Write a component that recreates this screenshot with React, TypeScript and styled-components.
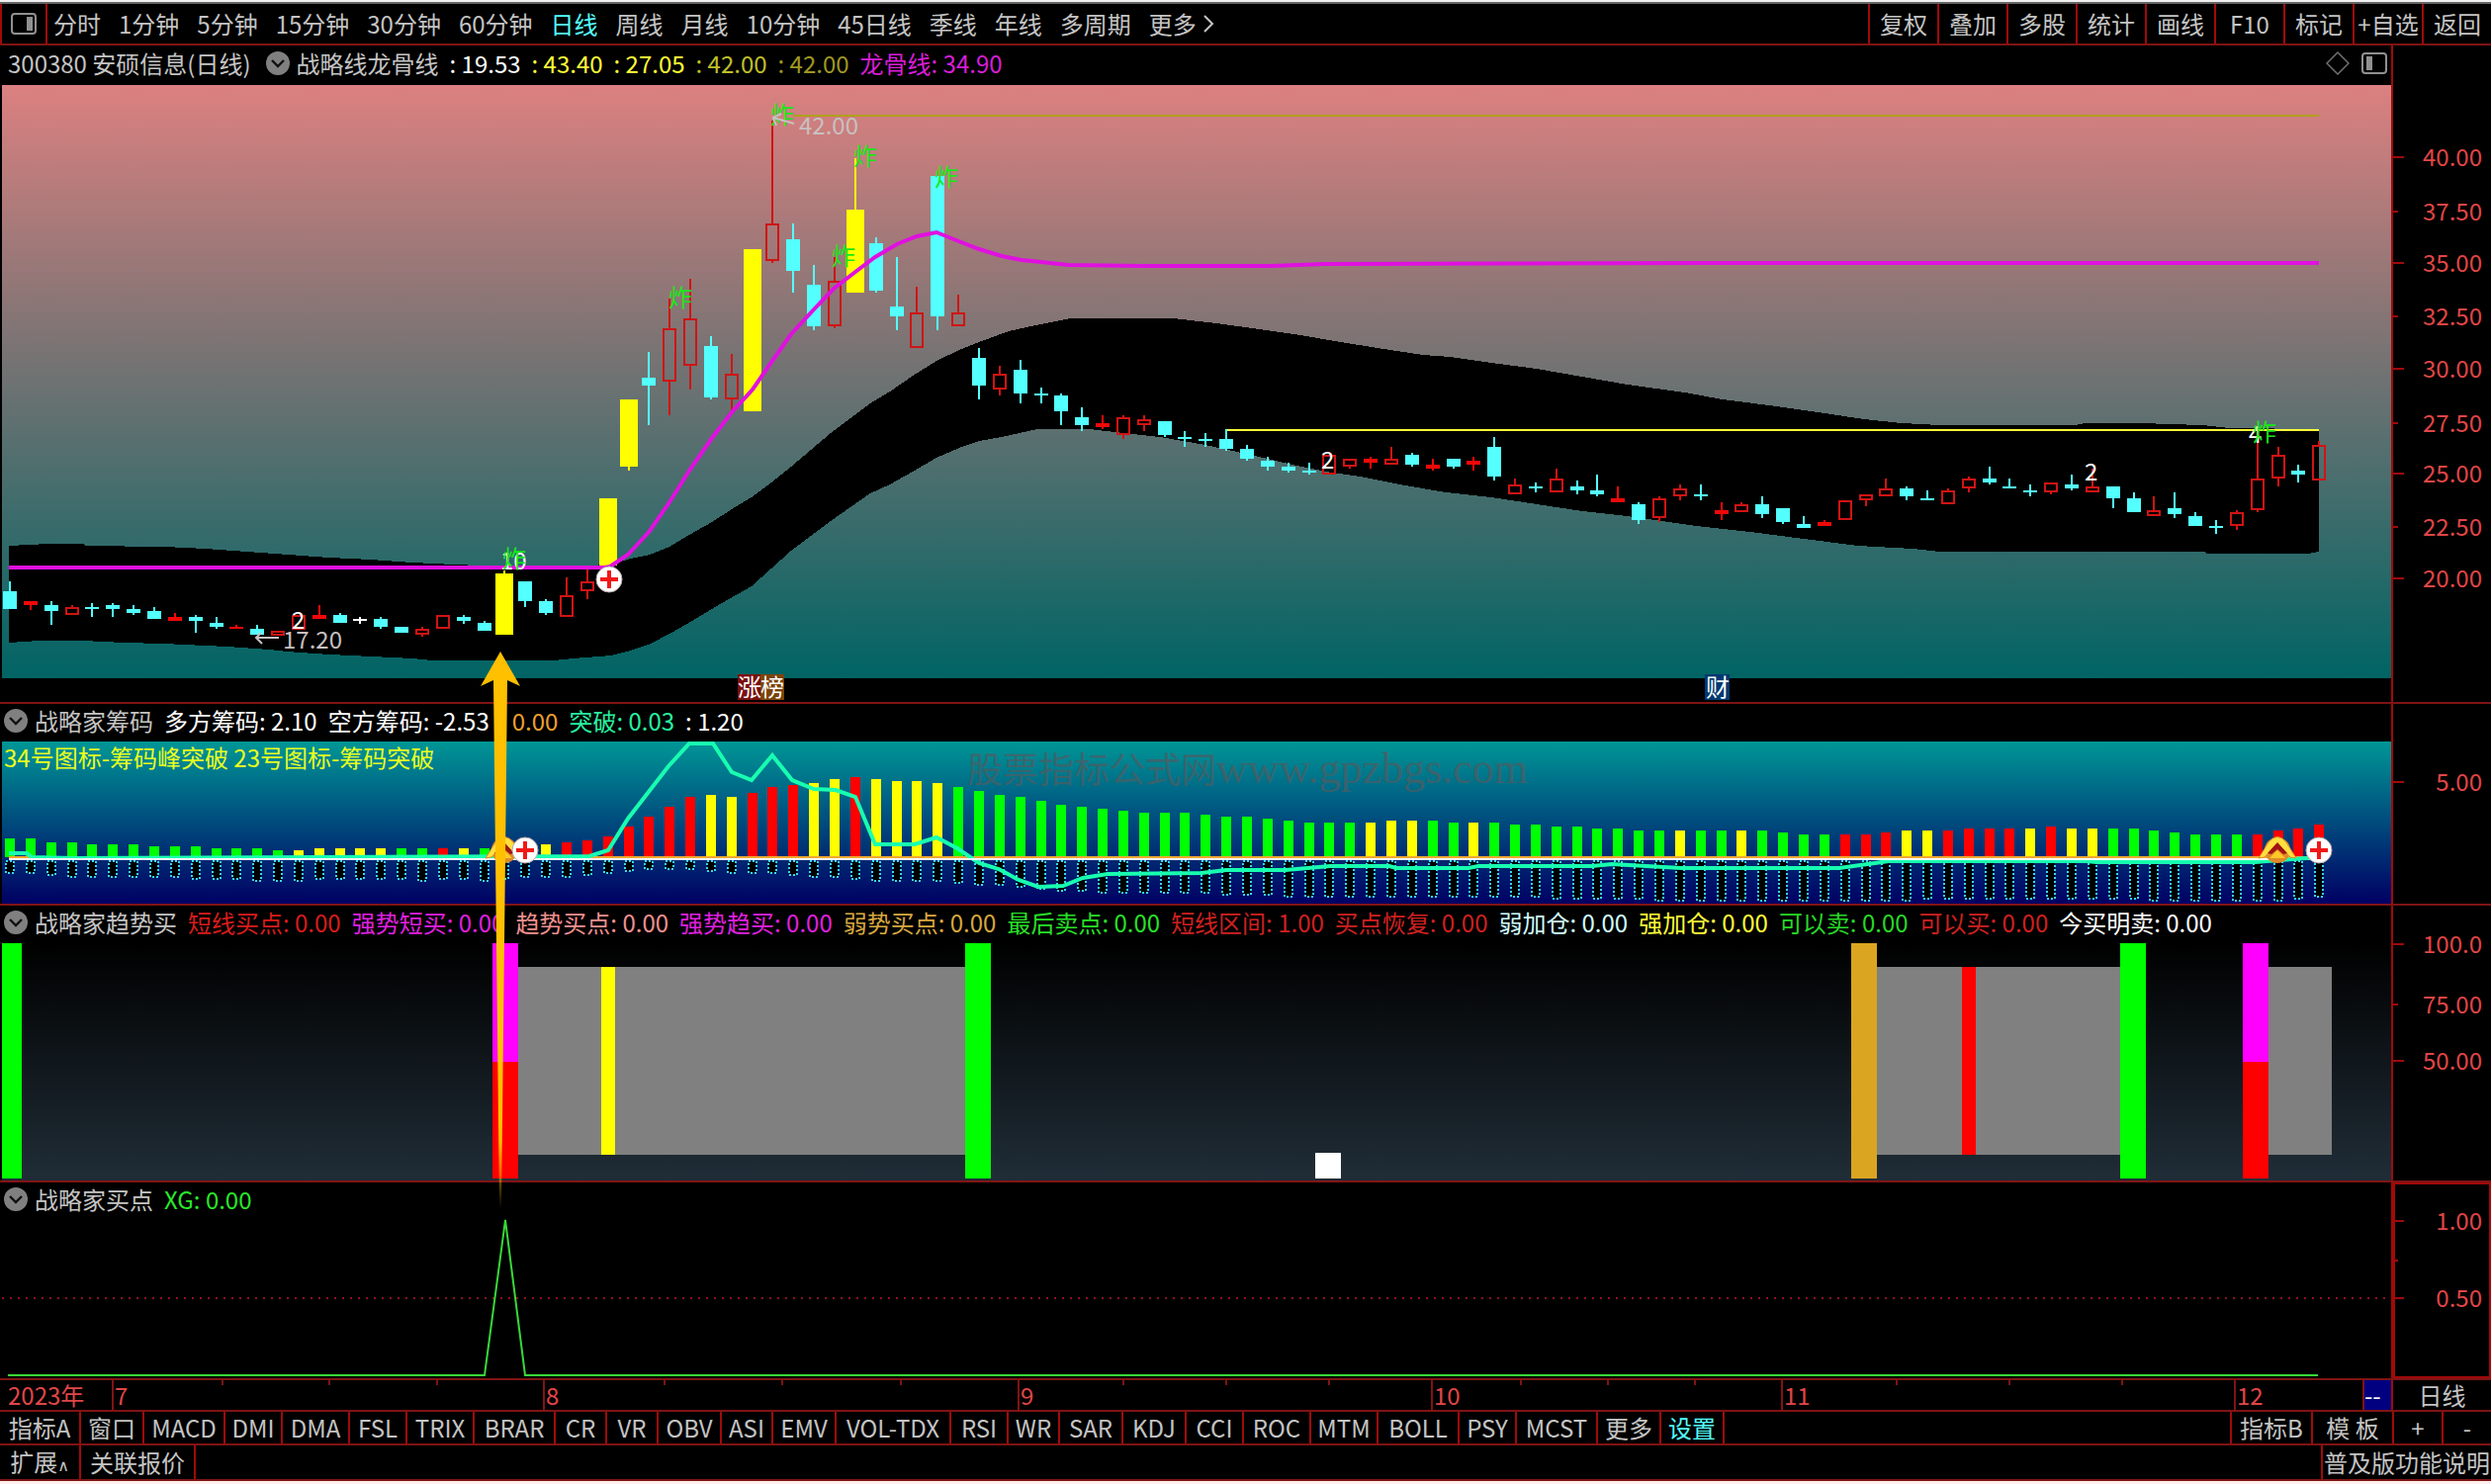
import React from "react";
import styled, { createGlobalStyle } from "styled-components";

const LINE = "#801414";
const RULE = "#a00a0a";
const GREY = "#c4c4c4";
const CYAN = "#54ffff";
const RED = "#d01414";
const AXIS = "#e04646";
const FONT = '"Noto Sans CJK SC", "Noto Sans", sans-serif';

const GlobalStyle = createGlobalStyle`
  * { box-sizing: border-box; }
  body {
    margin: 0;
    background: #000;
    font: 24px/32px ${FONT};
    color: ${GREY};
  }
  button {
    margin: 0;
    padding: 0;
    border: 0;
    background: none;
    color: inherit;
    font: inherit;
    white-space: nowrap;
    cursor: pointer;
  }
`;

const Page = styled.div`
  display: flex;
  flex-direction: column;
  min-height: 100vh;
  overflow: hidden;
  border-top: 2px solid #f0f0f0;
  border-bottom: 3px solid #fff0ee;
`;

const Toolbar = styled.header`
  display: flex;
  justify-content: space-between;
  height: 44px;
  border-top: 2px solid #646464;
  border-bottom: 2px solid ${LINE};
`;

const PeriodNav = styled.nav`
  display: flex;
  align-items: center;
  gap: 18px;
`;

const LayoutToggle = styled.button`
  display: flex;
  align-items: center;
  justify-content: center;
  align-self: stretch;
  width: 48px;
  margin-right: -12px;
  border-left: 2px solid ${RULE};
  border-right: 2px solid ${RULE};
`;

const PeriodButton = styled.button<{ $active?: boolean }>`
  display: flex;
  align-items: center;
  gap: 6px;
  color: ${(p) => (p.$active ? CYAN : GREY)};
`;

const ToolGroup = styled.div`
  display: flex;
`;

const ToolButton = styled.button`
  width: 70px;
  border-left: 2px solid ${RULE};
`;

const Charts = styled.main`
  position: relative;
  flex: 1;
  display: flex;
  flex-direction: column;
`;

const Panel = styled.section<{ $share: number }>`
  flex: ${(p) => p.$share} 1 0;
  min-height: 0;
  display: grid;
  grid-template-columns: minmax(0, 1fr) 101px;
  border-bottom: 2px solid ${LINE};
`;

const Pane = styled.div`
  position: relative;
  display: flex;
  flex-direction: column;
  min-height: 0;
`;

const PaneHeader = styled.div<{ $main?: boolean }>`
  display: flex;
  flex: none;
  align-items: center;
  gap: 11px;
  height: ${(p) => (p.$main ? 40 : 38)}px;
  padding: 0 4px 4px ${(p) => (p.$main ? 8 : 4)}px;
  white-space: nowrap;
`;

const Title = styled.span`
  display: flex;
  align-items: center;
  gap: 7px;
`;

const StockName = styled.span`
  padding-right: 8px;
`;

const Reading = styled.span<{ $color: string }>`
  color: ${(p) => p.$color};
`;

const HeaderTools = styled.span`
  display: flex;
  align-items: center;
  gap: 12px;
  margin-left: auto;
`;

const FoldButton = styled.button`
  display: flex;
`;

const Plot = styled.svg`
  display: block;
  flex: 1 1 0;
  width: 100%;
  min-height: 0;
  overflow: visible;
`;

const AxisColumn = styled.div<{ $boxed?: boolean }>`
  display: flex;
  min-height: 0;
  border-left: 2px solid ${RULE};
  ${(p) => p.$boxed && `box-shadow: inset 0 0 0 2px ${RULE};`}
`;

const Arrow = styled.svg`
  position: absolute;
  inset: 0;
  width: 100%;
  height: 100%;
  pointer-events: none;
`;

const DateRow = styled.div`
  display: grid;
  grid-template-columns: minmax(0, 1fr) 101px;
  height: 32px;
  border-bottom: 2px solid ${LINE};
  line-height: 30px;
`;

const Months = styled.div`
  display: grid;
  grid-template-columns: 113fr 436fr 480fr 418fr 354fr 458fr 130fr 29fr;
  color: ${AXIS};
`;

const Month = styled.div`
  position: relative;
  min-width: 0;
  padding-left: 1px;
  border-left: 2px solid ${LINE};
  &:first-child {
    padding-left: 8px;
    border: 0;
  }
`;

const Weeks = styled.div`
  position: absolute;
  inset: 0 0 auto;
  display: grid;
  grid-template-columns: repeat(4, 1fr);
  height: 5px;
  span + span {
    border-left: 2px solid ${LINE};
  }
`;

const Cursor = styled.div`
  min-width: 0;
  border-left: 2px solid ${LINE};
  background: #000080;
  color: #fff;
`;

const CurrentPeriod = styled.button`
  border-left: 2px solid ${RULE};
`;

const TabRow = styled.footer<{ $tall?: boolean }>`
  display: flex;
  justify-content: space-between;
  height: ${(p) => (p.$tall ? 36 : 34)}px;
  border-bottom: 2px solid ${LINE};
`;

const TabGroup = styled.div<{ $end?: boolean }>`
  display: flex;
  button {
    ${(p) => (p.$end ? "border-left" : "border-right")}: 2px solid ${RULE};
  }
`;

const TAB_WIDTHS = { xs: 52, s: 58, m: 64, l: 68, xl: 82, xxl: 116 };
type TabSize = keyof typeof TAB_WIDTHS;

const Tab = styled.button<{ $active?: boolean; $size: TabSize }>`
  width: ${(p) => TAB_WIDTHS[p.$size]}px;
  color: ${(p) => (p.$active ? CYAN : GREY)};
`;

const ZoomTab = styled.button`
  width: 50px;
`;

const HelpTab = styled.button`
  padding: 0 1px;
`;

const Caret = styled.span`
  font-family: "DejaVu Sans", sans-serif;
  font-size: 16px;
`;

/* Bar centre for a trading-day index. */
const X = (i: number) => 10 + 20.85 * i;

type Kind = "c" | "r" | "s" | "y" | "w";
type Candle = [Kind, number, number, number, number];

/* kind, high, body top, body bottom, low */
const CANDLES: Candle[] = [
  ["c", 588, 598, 616, 616], ["s", 608, 608, 612, 617], ["c", 608, 612, 618, 632], ["r", 612, 614, 622, 622],
  ["c", 610, 614, 616, 624], ["c", 610, 612, 616, 624], ["c", 612, 616, 620, 622], ["c", 614, 618, 626, 626],
  ["s", 620, 624, 628, 628], ["c", 622, 624, 628, 640], ["c", 624, 630, 634, 636], ["s", 632, 634, 636, 636],
  ["c", 632, 636, 642, 642], ["r", 638, 638, 643, 643], ["r", 622, 622, 637, 637], ["s", 612, 622, 626, 626],
  ["c", 620, 622, 630, 630], ["w", 624, 626, 628, 631], ["c", 624, 626, 634, 636], ["c", 634, 634, 640, 640],
  ["r", 634, 636, 642, 644], ["r", 622, 622, 636, 636], ["c", 622, 624, 628, 631], ["c", 628, 630, 638, 638],
  ["y", 577, 580, 642, 642], ["c", 588, 588, 608, 614], ["c", 606, 608, 620, 622], ["r", 584, 602, 624, 624],
  ["r", 576, 588, 598, 606], ["y", 504, 504, 572, 572], ["y", 404, 404, 472, 476], ["c", 356, 382, 390, 430],
  ["r", 302, 332, 386, 420], ["r", 282, 322, 370, 394], ["c", 340, 350, 402, 404], ["r", 358, 378, 404, 416],
  ["y", 252, 252, 416, 416], ["r", 122, 226, 264, 266], ["c", 226, 242, 274, 296], ["c", 268, 288, 330, 334],
  ["r", 260, 284, 330, 332], ["y", 160, 212, 296, 296], ["c", 240, 246, 294, 296], ["c", 260, 310, 320, 334],
  ["r", 290, 316, 352, 352], ["c", 178, 178, 320, 334], ["r", 298, 316, 330, 330], ["c", 352, 362, 390, 404],
  ["r", 370, 378, 394, 400], ["c", 364, 374, 398, 408], ["c", 392, 398, 400, 408], ["c", 398, 400, 416, 430],
  ["c", 412, 422, 430, 436], ["s", 420, 428, 432, 434], ["r", 420, 422, 440, 444], ["r", 420, 424, 430, 436],
  ["c", 426, 426, 440, 442], ["c", 436, 442, 444, 452], ["c", 438, 444, 446, 452], ["c", 434, 444, 454, 456],
  ["c", 450, 454, 464, 466], ["c", 462, 466, 472, 476], ["c", 468, 472, 476, 478], ["c", 468, 476, 478, 480],
  ["r", 460, 460, 480, 480], ["r", 464, 464, 472, 474], ["s", 462, 464, 468, 474], ["r", 452, 464, 470, 470],
  ["c", 458, 460, 470, 472], ["s", 464, 470, 474, 476], ["c", 464, 464, 472, 474], ["s", 462, 466, 470, 476],
  ["c", 442, 452, 482, 486], ["r", 484, 490, 500, 500], ["c", 488, 492, 494, 498], ["r", 474, 484, 498, 498],
  ["c", 486, 492, 496, 500], ["c", 480, 496, 500, 502], ["s", 492, 504, 508, 508], ["c", 508, 510, 526, 530],
  ["r", 502, 504, 524, 528], ["r", 490, 494, 502, 506], ["c", 490, 500, 502, 506], ["s", 508, 516, 520, 526],
  ["r", 508, 510, 518, 518], ["c", 502, 510, 520, 524], ["c", 514, 514, 528, 530], ["c", 522, 530, 534, 534],
  ["s", 526, 528, 532, 532], ["r", 506, 506, 526, 526], ["r", 500, 500, 506, 512], ["r", 484, 494, 502, 502],
  ["c", 492, 494, 502, 506], ["c", 496, 504, 506, 506], ["r", 494, 496, 510, 510], ["r", 482, 484, 494, 498],
  ["c", 472, 484, 488, 490], ["c", 484, 492, 494, 494], ["c", 490, 496, 498, 502], ["r", 488, 488, 498, 500],
  ["c", 480, 490, 494, 496], ["r", 474, 492, 498, 498], ["c", 492, 492, 504, 514], ["c", 498, 504, 518, 518],
  ["r", 502, 516, 522, 522], ["c", 498, 514, 520, 524], ["c", 518, 522, 532, 532], ["c", 526, 532, 534, 540],
  ["r", 516, 518, 532, 536], ["r", 443, 484, 516, 518], ["r", 452, 460, 484, 492], ["c", 470, 476, 480, 488],
  ["r", 446, 450, 486, 486],
];

const BAND_UPPER =
  "9,552 49,550 84,550 86,552 166,553 208,555 250,558 292,561 333,564 375,566 417,569 460,571 510,573 570,573 617,571 638,565 657,561 677,553 697,541 720,528 740,515 760,503 780,488 800,472 820,455 840,438 860,423 880,408 900,396 923,380 947,365 970,354 990,346 1020,335 1047,329 1083,322 1187,322 1230,327 1274,333 1315,339 1356,346 1393,352 1439,359 1467,361 1508,367 1554,373 1600,381 1646,389 1704,397 1742,404 1797,411 1852,419 1885,424 1923,428 1961,430 2098,430 2109,428 2164,428 2227,430 2254,433 2345,434";
const BAND_LOWER =
  "2345,558 2334,560 2231,560 2229,558 1961,558 1934,555 1879,552 1824,545 1770,538 1715,532 1646,522 1600,517 1554,510 1508,503 1462,498 1421,491 1375,482 1347,478 1311,471 1265,460 1219,450 1173,442 1127,437 1102,434 1049,434 1013,442 990,446 970,453 947,463 923,477 900,490 880,499 860,513 840,527 820,542 800,557 780,575 760,593 730,610 700,628 679,640 658,651 638,658 618,663 580,666 560,668 437,668 417,666 375,664 333,662 290,659 272,657 230,654 165,651 125,650 83,648 40,648 9,650";
const DRAGON_LINE =
  "9,574 612,574 617,573 635,561 657,537 677,508 697,476 720,443 740,417 761,394 781,365 800,338 823,313 843,292 865,275 885,260 907,247 927,239 947,235 967,243 990,252 1013,259 1033,263 1053,265 1080,268 1157,269 1285,269 1340,267 1720,266 2345,266";
const BREAK_LINE =
  "9,863 27,863 32,867 74,868 596,866 615,860 635,828 676,775 697,752 721,752 740,781 760,789 781,764 801,789 823,798 845,799 865,806 885,854 925,854 947,847 968,858 990,873 1010,879 1030,890 1050,897 1075,896 1095,888 1120,884 1215,883 1240,880 1300,880 1345,876 1405,876 1412,878 1485,878 1495,876 1610,876 1630,874 1700,878 1860,878 1910,871 2110,871 2120,872 2280,872 2345,867";

const repeat = (pairs: [number, number][]) => pairs.flatMap(([v, n]) => Array<number>(n).fill(v));

/* Top edge of each chip bar, run-length encoded. */
const CHIP_TOPS = repeat([
  [848, 2], [852, 2], [854, 3], [856, 3], [858, 3], [860, 2], [858, 11], [854, 1], [852, 1], [850, 1], [846, 1],
  [836, 1], [826, 1], [816, 1], [806, 1], [804, 1], [806, 1], [802, 1], [796, 1], [794, 1], [792, 1], [788, 1],
  [786, 1], [788, 1], [790, 2], [792, 1], [796, 1], [800, 1], [804, 1], [806, 1], [810, 1], [814, 1], [816, 1],
  [818, 1], [820, 1], [822, 3], [824, 1], [826, 2], [828, 1], [830, 1], [832, 4], [830, 3], [832, 3], [834, 2],
  [836, 2], [838, 2], [840, 7], [842, 1], [844, 4], [842, 1], [840, 3], [838, 4], [836, 1], [838, 4], [840, 1],
  [842, 1], [844, 4], [840, 1], [838, 1], [834, 1],
]);
const CHIP_COLORS =
  "ggggggggggggggyyyyyggrygyyyrrrrrrryyrrryyryyyygggggggggggggggggggg" +
  "yyyggygggggggggyggyggggrrryyrrrryryyggggggg" +
  "rrrr";
const CHIP_FLOORS = repeat([
  [884, 2], [886, 1], [888, 6], [890, 3], [892, 3], [890, 5], [892, 1], [890, 2], [892, 1], [890, 1], [888, 3],
  [886, 1], [884, 1], [882, 1], [880, 3], [882, 1], [884, 3], [886, 1], [888, 2], [890, 1], [892, 4], [894, 1],
  [896, 2], [898, 1], [900, 1], [902, 2], [904, 6], [906, 3], [908, 13], [910, 5], [912, 13], [910, 11], [912, 7],
  [910, 1], [908, 1],
]);
const BAR_FILL: Record<string, string> = { g: "#00ff00", y: "#ffff00", r: "#ff0000" };

const BLAST_LABELS: [number, number][] = [
  [508, 574], [676, 310], [779, 125], [863, 167], [945, 188], [841, 268], [2278, 446],
];

function CandleShape({ index, data }: { index: number; data: Candle }) {
  const [kind, high, top, bottom, low] = data;
  const x = Math.round(X(index));
  const color = { c: CYAN, r: RED, s: "#f00808", y: "#ffff00", w: "#ffffff" }[kind];
  const width = kind === "y" ? 18 : 14;
  const height = Math.max(2, bottom - top);
  return (
    <g fill={color}>
      <rect x={x - 1} y={high} width={2} height={top - high} />
      <rect x={x - 1} y={bottom} width={2} height={low - bottom} />
      {kind === "r" ? (
        <rect x={x - 6} y={top + 1} width={12} height={height - 2} fill="none" stroke={color} strokeWidth={2} />
      ) : (
        <rect x={Math.max(2, x - width / 2)} y={top} width={width} height={height} />
      )}
    </g>
  );
}

function CrossBadge({ x, y }: { x: number; y: number }) {
  return (
    <g>
      <circle cx={x} cy={y} r={13} fill="#fff" stroke="#b8a8a8" strokeWidth={1} />
      <path d={`M${x - 9} ${y}h18M${x} ${y - 9}v18`} stroke="#f01818" strokeWidth={4} />
    </g>
  );
}

function FlameBadge({ x, y }: { x: number; y: number }) {
  return (
    <g transform={`translate(${x} ${y})`}>
      <circle r={13} fill="#e08a28" />
      <path d="M-19 8L-9 -8Q0 -19 9 -8L19 8L13 7L0 -7L-13 7Z" fill="#ffe040" stroke="#e08a28" strokeWidth={1} />
      <path d="M-10 3L0 -8L10 3L6 4L0 -1L-6 4Z" fill="#a01410" />
      <path d="M-8 8L0 0L8 8Z" fill="#ffc828" />
    </g>
  );
}

function Fold({ label }: { label: string }) {
  return (
    <FoldButton type="button" aria-label={label}>
      <svg width="24" height="24" viewBox="0 0 24 24">
        <circle cx="12" cy="12" r="12" fill="#808080" />
        <path d="M6 9l6 6 6-6" fill="none" stroke="#101010" strokeWidth="2.4" />
      </svg>
    </FoldButton>
  );
}

type Tick = { y: number; text?: string; minor?: boolean };

function Axis({ top, height, ticks, boxed }: { top: number; height: number; ticks: Tick[]; boxed?: boolean }) {
  return (
    <AxisColumn $boxed={boxed}>
      <Plot viewBox={`0 ${top} 99 ${height}`} preserveAspectRatio="none">
        {ticks.map((t) => (
          <g key={t.y}>
            <rect x={0} y={t.y - 1} width={t.minor ? 5 : 11} height={2} fill={RULE} />
            {t.text && (
              <text x={90} y={t.y + 9} textAnchor="end" fontSize={24} fill={AXIS}>
                {t.text}
              </text>
            )}
          </g>
        ))}
      </Plot>
    </AxisColumn>
  );
}

function PriceChart() {
  return (
    <Plot viewBox="0 86 2418 624" preserveAspectRatio="none" fontSize={24}>
      <defs>
        <linearGradient id="price-sky" x1="0" y1="0" x2="0" y2="1">
          <stop offset="0" stopColor="#dc8080" />
          <stop offset="1" stopColor="#006464" />
        </linearGradient>
      </defs>
      <rect x={2} y={86} width={2416} height={600} fill="url(#price-sky)" />
      <polygon points={`${BAND_UPPER} ${BAND_LOWER}`} fill="#000" shapeRendering="crispEdges" />
      <g shapeRendering="crispEdges">
        <rect x={802} y={116} width={1543} height={2} fill="#b0a01c" />
        <rect x={1240} y={434} width={1105} height={2} fill="#ffff38" />
        {CANDLES.map((c, i) => (
          <CandleShape key={i} index={i} data={c} />
        ))}
      </g>
      <polyline points={DRAGON_LINE} fill="none" stroke="#e010e0" strokeWidth={4} />
      <g fill="#ffffff">
        <text x={295} y={636}>2</text>
        <text x={506} y={576}>10</text>
        <text x={1336} y={474}>2</text>
        <text x={2108} y={486}>2</text>
        <text x={2274} y={448}>4</text>
      </g>
      <g fill="#18e818">
        {BLAST_LABELS.map(([x, y]) => (
          <text key={x} x={x} y={y}>炸</text>
        ))}
      </g>
      <g fill="#c8c0c0">
        <text x={808} y={136}>42.00</text>
        <text x={286} y={656}>17.20</text>
      </g>
      <path d="M803 125L782 119M790 115L782 119L785 127" fill="none" stroke="#c8c0c0" strokeWidth={2} />
      <path d="M282 645H259M264 640L259 645L265 651" fill="none" stroke="#c8c0c0" strokeWidth={2} />
      <CrossBadge x={616} y={586} />
      <rect x={746} y={682} width={23} height={26} fill="#7a1010" />
      <rect x={769} y={682} width={24} height={26} fill="#7a4408" />
      <rect x={1724} y={682} width={25} height={26} fill="#003870" />
      <g fill="#ffffff">
        <text x={746} y={704}>涨</text>
        <text x={769} y={704}>榜</text>
        <text x={1725} y={704}>财</text>
      </g>
    </Plot>
  );
}

function ChipChart() {
  return (
    <Plot viewBox="0 750 2418 164" preserveAspectRatio="none">
      <defs>
        <linearGradient id="chip-sea" x1="0" y1="0" x2="0" y2="1">
          <stop offset="0" stopColor="#009696" />
          <stop offset="1" stopColor="#000064" />
        </linearGradient>
      </defs>
      <rect x={2} y={750} width={2416} height={164} fill="url(#chip-sea)" />
      <g fill="#4c5e64" opacity={0.75}>
        <text x={978} y={792} fontSize={36}>股票指标公式网</text>
        <text x={1230} y={792} fontSize={44} fontFamily='"Liberation Serif", serif'>www.gpzbgs.com</text>
      </g>
      <text x={4} y={776} fontSize={24} fill="#e8ff20">34号图标-筹码峰突破 23号图标-筹码突破</text>
      <g shapeRendering="crispEdges">
        {CHIP_TOPS.map((top, i) => (
          <rect key={i} x={Math.max(2, Math.round(X(i)) - 5)} y={top} width={10} height={867 - top} fill={BAR_FILL[CHIP_COLORS[i]]} />
        ))}
        {CHIP_FLOORS.map((floor, i) => (
          <rect
            key={i}
            x={Math.round(X(i)) - 4}
            y={871}
            width={8}
            height={floor - 872}
            fill="#000"
            stroke="#38d8f0"
            strokeWidth={2}
            strokeDasharray="2 2"
          />
        ))}
        <rect x={9} y={866} width={2336} height={2} fill="#f0a830" />
        <rect x={9} y={868} width={2336} height={2} fill="#ffffff" />
      </g>
      <polyline points={BREAK_LINE} fill="none" stroke="#18ffb0" strokeWidth={4} />
      <rect x={9} y={868} width={2300} height={2} fill="#ffffff" />
      <FlameBadge x={510} y={860} />
      <CrossBadge x={531} y={860} />
      <FlameBadge x={2303} y={860} />
      <CrossBadge x={2345} y={860} />
    </Plot>
  );
}

/* x, y, width, height, fill */
const TREND_BLOCKS: [number, number, number, number, string][] = [
  [524, 978, 452, 190, "#808080"],
  [1898, 978, 246, 190, "#808080"],
  [2294, 978, 64, 190, "#808080"],
  [2, 954, 20, 238, "#00ff00"],
  [498, 954, 26, 120, "#ff00ff"],
  [498, 1074, 26, 118, "#ff0000"],
  [608, 978, 14, 190, "#ffff00"],
  [976, 954, 26, 238, "#00ff00"],
  [1330, 1166, 26, 26, "#ffffff"],
  [1872, 954, 26, 238, "#daa520"],
  [1984, 978, 14, 190, "#ff0000"],
  [2144, 954, 26, 238, "#00ff00"],
  [2268, 954, 26, 120, "#ff00ff"],
  [2268, 1074, 26, 118, "#ff0000"],
];

function TrendChart() {
  return (
    <Plot viewBox="0 954 2418 240" preserveAspectRatio="none" shapeRendering="crispEdges">
      <defs>
        <linearGradient id="trend-night" x1="0" y1="0" x2="0" y2="1">
          <stop offset="0" stopColor="#000000" />
          <stop offset="1" stopColor="#202d37" />
        </linearGradient>
      </defs>
      <rect x={2} y={954} width={2416} height={240} fill="url(#trend-night)" />
      {TREND_BLOCKS.map(([x, y, w, h, fill]) => (
        <rect key={`${x}-${y}`} x={x} y={y} width={w} height={h} fill={fill} />
      ))}
    </Plot>
  );
}

function BuyPointChart() {
  return (
    <Plot viewBox="0 1234 2418 160" preserveAspectRatio="none">
      <path d="M2 1313H2418" stroke="#8c1420" strokeWidth={2} strokeDasharray="2 6" shapeRendering="crispEdges" />
      <polyline points="8,1391 490,1391 511,1234 531,1391 2344,1391" fill="none" stroke="#38d838" strokeWidth={2} />
    </Plot>
  );
}

const PERIODS = ["分时", "1分钟", "5分钟", "15分钟", "30分钟", "60分钟", "日线", "周线", "月线", "10分钟", "45日线", "季线", "年线", "多周期"];
const TOOLS = ["复权", "叠加", "多股", "统计", "画线", "F10", "标记", "+自选", "返回"];
const INDICATORS: [string, TabSize][] = [
  ["指标A", "xl"], ["窗口", "m"], ["MACD", "xl"], ["DMI", "s"], ["DMA", "l"], ["FSL", "s"], ["TRIX", "l"],
  ["BRAR", "xl"], ["CR", "xs"], ["VR", "xs"], ["OBV", "m"], ["ASI", "xs"], ["EMV", "m"], ["VOL-TDX", "xxl"],
  ["RSI", "s"], ["WR", "xs"], ["SAR", "m"], ["KDJ", "m"], ["CCI", "s"], ["ROC", "l"], ["MTM", "l"],
  ["BOLL", "xl"], ["PSY", "s"], ["MCST", "xl"], ["更多", "m"], ["设置", "m"],
];
const MONTHS = ["7", "8", "9", "10", "11", "12"];

const PRICE_READINGS: [string, string][] = [
  [": 19.53", "#ffffff"], [": 43.40", "#ffff38"], [": 27.05", "#ffff38"], [": 42.00", "#c0c028"],
  [": 42.00", "#a09820"], ["龙骨线: 34.90", "#d81ed8"],
];
const CHIP_READINGS: [string, string][] = [
  ["多方筹码: 2.10", "#ffffff"], ["空方筹码: -2.53", "#ffffff"], [": 0.00", "#f0a030"],
  ["突破: 0.03", "#28f0a0"], [": 1.20", "#ffffff"],
];
const TREND_READINGS: [string, string][] = [
  ["短线买点: 0.00", "#d81c1c"], ["强势短买: 0.00", "#e020e0"], ["趋势买点: 0.00", "#f09090"],
  ["强势趋买: 0.00", "#e020e0"], ["弱势买点: 0.00", "#d8a840"], ["最后卖点: 0.00", "#28e028"],
  ["短线区间: 1.00", "#d02020"], ["买点恢复: 0.00", "#d02020"], ["弱加仓: 0.00", "#d0ffff"],
  ["强加仓: 0.00", "#ffff38"], ["可以卖: 0.00", "#28d828"], ["可以买: 0.00", "#d02020"], ["今买明卖: 0.00", "#ffffff"],
];

function Readings({ items }: { items: [string, string][] }) {
  return (
    <>
      {items.map(([text, color], i) => (
        <Reading key={i} $color={color}>{text}</Reading>
      ))}
    </>
  );
}

export default function App() {
  return (
    <Page>
      <GlobalStyle />
      <Toolbar>
        <PeriodNav>
          <LayoutToggle type="button" aria-label="侧栏">
            <svg width="26" height="22" viewBox="0 0 26 22">
              <rect x="1" y="1" width="24" height="20" rx="3" fill="none" stroke="#909090" strokeWidth="2" />
              <rect x="16" y="4" width="6" height="14" fill="#909090" />
            </svg>
          </LayoutToggle>
          {PERIODS.map((p) => (
            <PeriodButton key={p} type="button" $active={p === "日线"}>{p}</PeriodButton>
          ))}
          <PeriodButton type="button">
            更多
            <svg width="12" height="18" viewBox="0 0 12 18">
              <path d="M2 1l8 8-8 8" fill="none" stroke={GREY} strokeWidth="2" />
            </svg>
          </PeriodButton>
        </PeriodNav>
        <ToolGroup>
          {TOOLS.map((t) => (
            <ToolButton key={t} type="button">{t}</ToolButton>
          ))}
        </ToolGroup>
      </Toolbar>

      <Charts>
        <Panel $share={664}>
          <Pane>
            <PaneHeader $main>
              <Title>
                <StockName>300380 安硕信息(日线)</StockName>
                <Fold label="主图指标" />
                <span>战略线龙骨线</span>
              </Title>
              <Readings items={PRICE_READINGS} />
              <HeaderTools>
                <svg width="24" height="24" viewBox="0 0 24 24">
                  <path d="M12 1l11 11-11 11L1 12z" fill="none" stroke="#707070" strokeWidth="1.5" />
                </svg>
                <svg width="26" height="22" viewBox="0 0 26 22">
                  <rect x="1" y="1" width="24" height="20" rx="3" fill="none" stroke="#909090" strokeWidth="2" />
                  <rect x="5" y="4" width="6" height="14" fill="#909090" />
                </svg>
              </HeaderTools>
            </PaneHeader>
            <PriceChart />
          </Pane>
          <Axis
            top={46}
            height={664}
            ticks={[
              { y: 159, text: "40.00" }, { y: 214, text: "37.50", minor: true }, { y: 266, text: "35.00" },
              { y: 320, text: "32.50", minor: true }, { y: 373, text: "30.00" }, { y: 428, text: "27.50", minor: true },
              { y: 479, text: "25.00" }, { y: 533, text: "22.50", minor: true }, { y: 585, text: "20.00" },
            ]}
          />
        </Panel>

        <Panel $share={202}>
          <Pane>
            <PaneHeader>
              <Title>
                <Fold label="战略家筹码" />
                <span>战略家筹码</span>
              </Title>
              <Readings items={CHIP_READINGS} />
            </PaneHeader>
            <ChipChart />
          </Pane>
          <Axis top={712} height={202} ticks={[{ y: 791, text: "5.00" }]} />
        </Panel>

        <Panel $share={278}>
          <Pane>
            <PaneHeader>
              <Title>
                <Fold label="战略家趋势买" />
                <span>战略家趋势买</span>
              </Title>
              <Readings items={TREND_READINGS} />
            </PaneHeader>
            <TrendChart />
          </Pane>
          <Axis
            top={916}
            height={278}
            ticks={[{ y: 955, text: "100.0" }, { y: 1016, text: "75.00", minor: true }, { y: 1073, text: "50.00" }]}
          />
        </Panel>

        <Panel $share={198}>
          <Pane>
            <PaneHeader>
              <Title>
                <Fold label="战略家买点" />
                <span>战略家买点</span>
              </Title>
              <Reading $color="#28e828">XG: 0.00</Reading>
            </PaneHeader>
            <BuyPointChart />
          </Pane>
          <Axis
            boxed
            top={1196}
            height={198}
            ticks={[{ y: 1235, text: "1.00" }, { y: 1275, minor: true }, { y: 1313, text: "0.50" }]}
          />
        </Panel>

        <Arrow viewBox="0 46 2519 1350" preserveAspectRatio="none">
          <defs>
            <linearGradient id="arrow-fade" x1="0" y1="0" x2="0" y2="1">
              <stop offset="0.88" stopColor="#ffc000" />
              <stop offset="1" stopColor="#ffc000" stopOpacity="0" />
            </linearGradient>
          </defs>
          <polygon points="506,659 526,694 513,688 507,1222 505,1222 499,688 486,694" fill="url(#arrow-fade)" />
        </Arrow>
      </Charts>

      <DateRow>
        <Months>
          <Month>2023年</Month>
          {MONTHS.map((name) => (
            <Month key={name}>
              {name}
              {name !== "12" && (
                <Weeks>
                  <span /><span /><span /><span />
                </Weeks>
              )}
            </Month>
          ))}
          <Cursor>--</Cursor>
        </Months>
        <CurrentPeriod type="button">日线</CurrentPeriod>
      </DateRow>

      <TabRow>
        <TabGroup>
          {INDICATORS.map(([name, size]) => (
            <Tab key={name} type="button" $size={size} $active={name === "设置"}>{name}</Tab>
          ))}
        </TabGroup>
        <TabGroup $end>
          <Tab type="button" $size="xl">指标B</Tab>
          <Tab type="button" $size="xl">模 板</Tab>
          <ZoomTab type="button">+</ZoomTab>
          <ZoomTab type="button">-</ZoomTab>
        </TabGroup>
      </TabRow>
      <TabRow $tall>
        <TabGroup>
          <Tab type="button" $size="xl">扩展<Caret>∧</Caret></Tab>
          <Tab type="button" $size="xxl">关联报价</Tab>
        </TabGroup>
        <TabGroup $end>
          <HelpTab type="button">普及版功能说明</HelpTab>
        </TabGroup>
      </TabRow>
    </Page>
  );
}
